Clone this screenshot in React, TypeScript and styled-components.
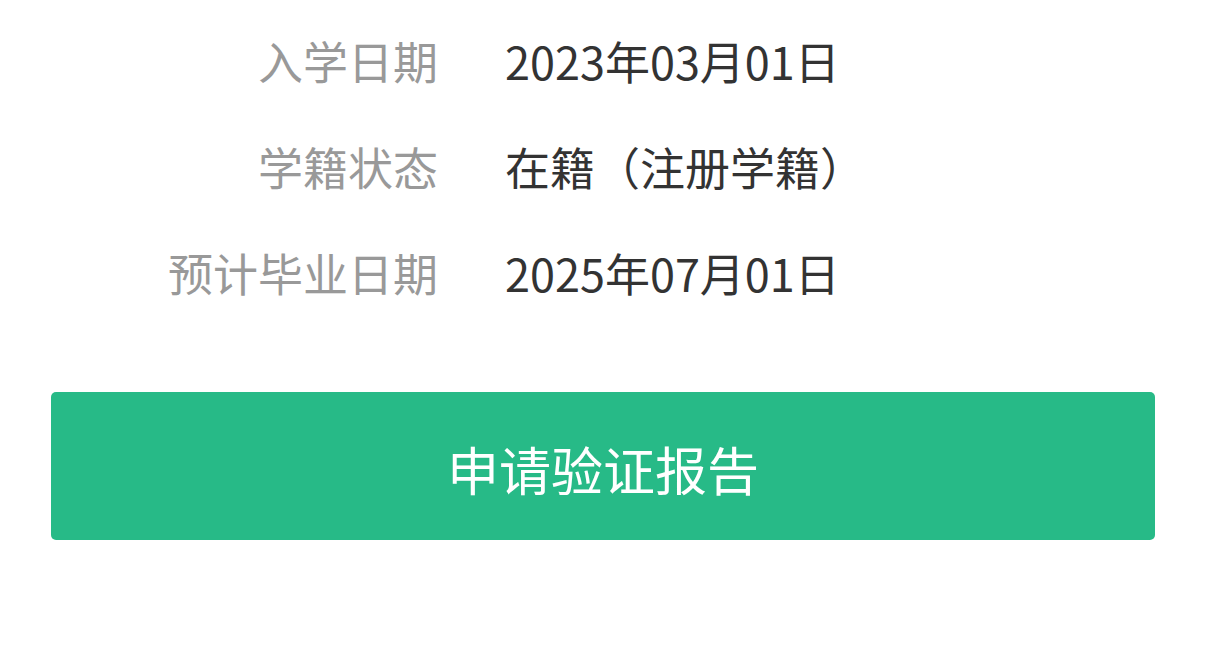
import React from 'react';
import styled, { createGlobalStyle } from 'styled-components';

type InfoRow = {
  label: string;
  value: string;
};

const rows: InfoRow[] = [
  { label: '入学日期', value: '2023年03月01日' },
  { label: '学籍状态', value: '在籍（注册学籍）' },
  { label: '预计毕业日期', value: '2025年07月01日' },
];

const GlobalStyle = createGlobalStyle`
  html, body {
    margin: 0;
    padding: 0;
    background: #ffffff;
    font-family: "Noto Sans CJK SC", "Noto Sans", sans-serif;
  }
`;

const Page = styled.div`
  width: 1206px;
  height: 645px;
  box-sizing: border-box;
  padding: 7px 51px 0;
  background: #ffffff;
`;

const InfoList = styled.div`
  display: grid;
  grid-template-columns: 387px 1fr;
  grid-auto-rows: 106px;
  column-gap: 67px;
  align-items: center;
`;

const Label = styled.div`
  font-size: 45px;
  color: #999999;
  text-align: right;
  white-space: nowrap;
`;

const Value = styled.div`
  font-size: 45px;
  color: #333333;
  white-space: nowrap;
`;

const SubmitButton = styled.button`
  display: flex;
  align-items: center;
  justify-content: center;
  width: 100%;
  height: 148px;
  margin-top: 67px;
  border: none;
  border-radius: 5px;
  background: #27ba87;
  color: #ffffff;
  font-family: "Noto Sans CJK SC", "Noto Sans", sans-serif;
  font-size: 52px;
  padding: 4px 0 0;
  cursor: pointer;
`;

const App = () => {
  return (
    <>
      <GlobalStyle />
      <Page>
        <InfoList>
          {rows.map(row => (
            <React.Fragment key={row.label}>
              <Label>{row.label}</Label>
              <Value>{row.value}</Value>
            </React.Fragment>
          ))}
        </InfoList>
        <SubmitButton>申请验证报告</SubmitButton>
      </Page>
    </>
  );
};

export default App;
